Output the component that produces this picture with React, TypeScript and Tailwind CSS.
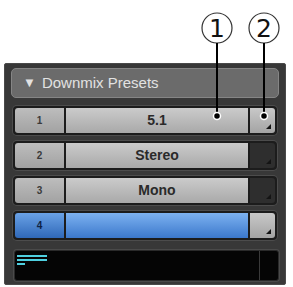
import React from 'react'

type Row = { n: string; name: string; blue?: boolean; darkDrop?: boolean }

const rows: Row[] = [
	{ n: '1', name: '5.1' },
	{ n: '2', name: 'Stereo', darkDrop: true },
	{ n: '3', name: 'Mono', darkDrop: true },
	{ n: '4', name: '', blue: true },
]

function PresetRow({ row }: { row: Row }) {
	const numCls = row.blue
		? 'bg-gradient-to-b from-[#6aa2e6] to-[#2f68b8] text-[#0e2244]'
		: 'bg-gradient-to-b from-[#bdbdbd] to-[#a2a2a2] text-[#3a3a3a]'
	const nameCls = row.blue
		? 'bg-gradient-to-b from-[#7db2f0] to-[#3b78cc]'
		: 'bg-gradient-to-b from-[#cbcbcb] to-[#a9a9a9]'
	const dropCls = row.darkDrop
		? 'bg-[#2e2e2e]'
		: 'bg-gradient-to-b from-[#c8c8c8] to-[#a4a4a4]'
	return (
		<div className="flex h-[29px] rounded-[4px] bg-[#1c1c1c] p-[2px] gap-[2px] shadow-[0_0_0_1px_#4c4c4c]">
			<div className={`w-[49px] flex items-center justify-center rounded-l-[3px] text-[10px] font-bold ${numCls}`}>
				{row.n}
			</div>
			<div className={`flex-1 flex items-center justify-center text-[14px] font-bold text-[#2a2a2a] ${nameCls}`}>
				{row.name}
			</div>
			<div className={`w-[25px] relative rounded-r-[3px] ${dropCls}`}>
				<div className="absolute right-[4px] bottom-[4px] w-0 h-0 border-l-[5px] border-l-transparent border-b-[5px] border-b-[#141414]" />
			</div>
		</div>
	)
}

function Callout({ label, x, dotY }: { label: string; x: number; dotY: number }) {
	return (
		<>
			<ellipse cx={x} cy={28} rx={15} ry={15} fill="white" stroke="#333" strokeWidth={1.2} />
			<text x={x} y={37} textAnchor="middle" fontSize={25} fontFamily="DejaVu Sans, sans-serif" fill="#111">
				{label}
			</text>
			<line x1={x} y1={43} x2={x} y2={dotY} stroke="#000" strokeWidth={2} />
			<circle cx={x} cy={dotY} r={3.5} fill="#000" stroke="#fff" strokeWidth={1.5} />
		</>
	)
}

export default function App() {
	return (
		<div className="relative w-[293px] h-[287px] bg-white font-['Liberation_Sans',sans-serif]">
			<div className="absolute left-[4px] top-[63px] w-[282px] h-[222px] bg-[#383838] border border-[#4a4a4a] rounded-[2px] flex flex-col px-[6px] pt-[4px]">
				<div className="h-[30px] rounded-[5px] bg-[#6b6b6b] border border-[#858585] flex items-center pl-[11px] gap-[6px] text-[15px] text-[#e2e2e2]">
					<span className="text-[13px]">▼</span>
					<span>Downmix Presets</span>
				</div>
				<div className="flex flex-col gap-[6px] mt-[8px] px-[2px]">
					{rows.map((r) => (
						<PresetRow key={r.n} row={r} />
					))}
				</div>
				<div className="mt-[10px] ml-[3px] h-[31px] rounded-[3px] bg-[#050505] border border-[#2a2a2a] flex shadow-[0_0_0_1px_#4a4a4a]">
					<div className="flex-1 flex flex-col gap-[2px] pt-[4px] pl-[2px]">
						<div className="w-[30px] h-[2px] bg-[#4fd0e0]" />
						<div className="w-[30px] h-[2px] bg-[#4fd0e0]" />
						<div className="w-[8px] h-[2px] bg-[#4fd0e0]" />
					</div>
					<div className="w-[19px] border-l border-[#3a3a3a]" />
				</div>
			</div>
			<svg className="absolute left-0 top-0" width={293} height={287}>
				<Callout label="1" x={217} dotY={116} />
				<Callout label="2" x={264} dotY={116} />
			</svg>
		</div>
	)
}
